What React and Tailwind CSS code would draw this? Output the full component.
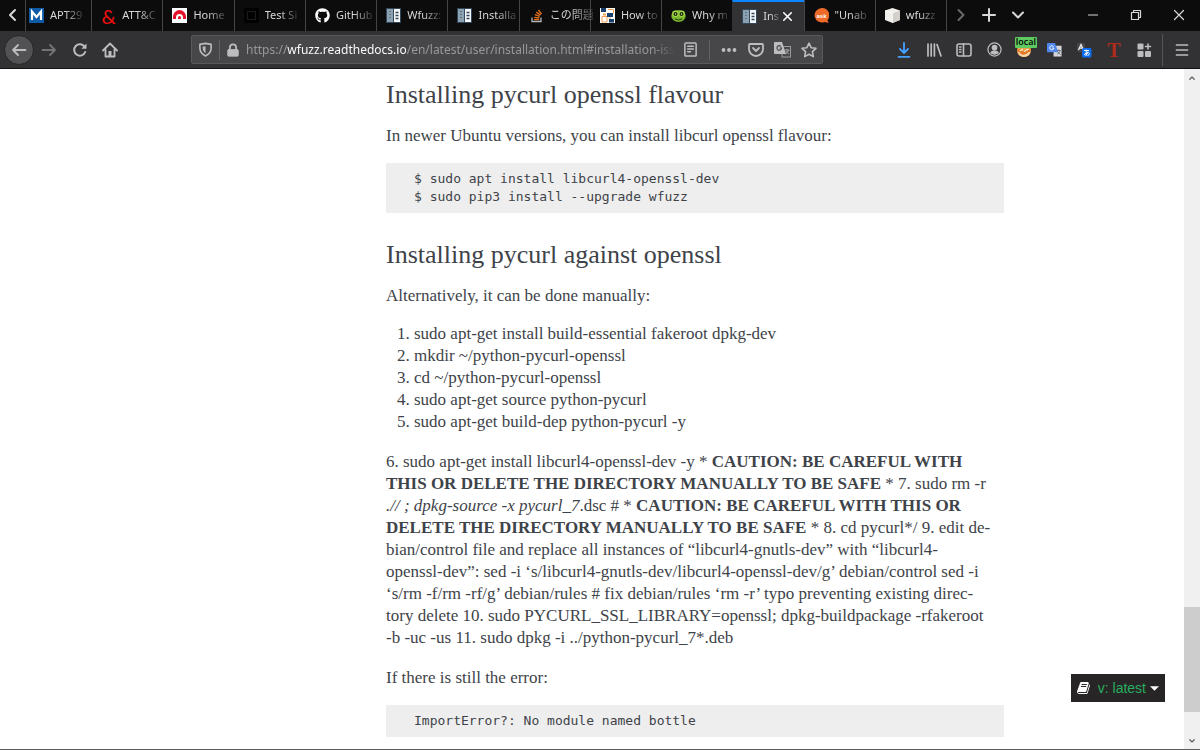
import React from "react";
import { FaGithub } from "react-icons/fa";

const fade = "[mask-image:linear-gradient(to_right,black_45%,rgba(0,0,0,0.2))]";

function DocsIcon() {
  return (
    <svg viewBox="0 0 15 15" className="h-[15px] w-[15px] shrink-0">
      <rect width="15" height="15" fill="#32485a" />
      <rect x="1" y="1" width="6" height="13" fill="#8ca1af" />
      <rect x="8" y="1" width="6" height="13" fill="#f4f6f7" />
      <path d="M3 3.500h2M3 6.500h2M3 9.500h2" stroke="#5c7485" />
      <path d="M9.500 4.500h3M9.500 7.500h3M9.500 10.500h3" stroke="#32485a" strokeWidth="1.600" />
    </svg>
  );
}

function MitreIcon() {
  return (
    <svg viewBox="0 0 15 15" className="h-[15px] w-[15px] shrink-0">
      <rect width="15" height="15" fill="#0d5aa6" />
      <path d="M3 12V3.500L7.500 9L12 3.500V12" fill="none" stroke="#fff" strokeWidth="2.200" />
    </svg>
  );
}

function Ampersand() {
  return <span aria-hidden="true" className="w-[15px] shrink-0 text-center font-['Lato',sans-serif] text-[20px] leading-none text-[#ee0f0f]">&amp;</span>;
}

function HomeFavicon() {
  return (
    <svg viewBox="0 0 15 15" className="h-[15px] w-[15px] shrink-0">
      <rect width="15" height="15" fill="#fff" />
      <path d="M1 11V8.500a6.500 6.500 0 0 1 13 0V11h-3V9.500a3.500 3.500 0 0 0-7 0V11z" fill="#e3122c" />
      <path d="M6 11V9.500a1.500 1.500 0 0 1 3 0V11z" fill="#e3122c" />
    </svg>
  );
}

function DarkSquare() {
  return (
    <svg viewBox="0 0 15 15" className="h-[15px] w-[15px] shrink-0">
      <rect width="15" height="15" rx="2" fill="#020202" />
      <rect x="3.500" y="3.500" width="8" height="8" fill="none" stroke="#1c1c1c" />
    </svg>
  );
}

function StackIcon() {
  return (
    <svg viewBox="0 0 15 15" className="h-[15px] w-[15px] shrink-0" fill="none">
      <path d="M3 9.500v4h9v-4" stroke="#b4b6b8" strokeWidth="1.300" />
      <path d="M5 11.700h5.200M5.200 9.300l5.100.7M5.900 6.600l4.800 1.700M7.300 4.100l4.200 3M9.500 2l3 4.200" stroke="#e8701c" strokeWidth="1.300" />
    </svg>
  );
}

function FlowFavicon() {
  return (
    <svg viewBox="0 0 15 15" className="h-[15px] w-[15px] shrink-0">
      <rect width="15" height="15" fill="#fff" />
      <path d="M8 1.500h5.500v4M2 8.500h5v5.500h-5zM10 9v4.500h4" fill="none" stroke="#f0a050" />
      <rect x="1" y="0" width="5" height="4" fill="#17406d" />
      <rect x="7" y="5" width="6" height="4" fill="#17406d" />
      <rect x="3" y="5.500" width="3" height="2" fill="#f0a050" />
      <rect x="9" y="11" width="5" height="3.500" fill="#17406d" />
    </svg>
  );
}

function FrogIcon() {
  return (
    <svg viewBox="0 0 15 15" className="h-[15px] w-[15px] shrink-0">
      <ellipse cx="7.500" cy="8" rx="7.200" ry="6" fill="#78b52c" />
      <circle cx="4.300" cy="5.800" r="3.200" fill="#a4d64b" />
      <circle cx="10.700" cy="5.800" r="3.200" fill="#a4d64b" />
      <circle cx="4.500" cy="6" r="2" fill="#182708" />
      <circle cx="10.500" cy="6" r="2" fill="#182708" />
      <circle cx="4.500" cy="6" r=".7" fill="#d6f19b" />
      <circle cx="10.500" cy="6" r=".7" fill="#d6f19b" />
      <path d="M4 11q3.500 2 7 0" fill="none" stroke="#294010" />
    </svg>
  );
}

function AskIcon() {
  return (
    <svg viewBox="0 0 15 15" className="h-[15px] w-[15px] shrink-0">
      <path d="M7.500 0a7.500 7.300 0 0 1 6 12l1 3-3.500-1A7.500 7.300 0 1 1 7.500 0z" fill="#ef6a28" />
      <text x="7.500" y="9.500" textAnchor="middle" fontSize="6" fontWeight="700" fontFamily="Liberation Sans, sans-serif" fill="#fff">ask</text>
    </svg>
  );
}

function CubeIcon() {
  return (
    <svg viewBox="0 0 15 15" className="h-[15px] w-[15px] shrink-0">
      <path d="M7.500 0L15 2.500V12L7.500 15L0 12V2.500z" fill="#f2f0ed" />
      <path d="M7.500 5.500L15 2.500V12L7.500 15z" fill="#d3d0cb" />
      <path d="M0 2.500l7.500 3V15" fill="none" stroke="#fff" strokeWidth=".6" />
    </svg>
  );
}

const tabs = [
  { icon: <MitreIcon />, label: "APT29", first: true },
  { icon: <Ampersand />, label: "ATT&C" },
  { icon: <HomeFavicon />, label: "Home" },
  { icon: <DarkSquare />, label: "Test Si" },
  { icon: <FaGithub className="h-[15px] w-[15px] shrink-0 text-white" />, label: "GitHub" },
  { icon: <DocsIcon />, label: "Wfuzz:" },
  { icon: <DocsIcon />, label: "Installa" },
  { icon: <StackIcon />, label: "この問題" },
  { icon: <FlowFavicon />, label: "How to" },
  { icon: <FrogIcon />, label: "Why m" },
  { icon: <DocsIcon />, label: "Ins", active: true },
  { icon: <AskIcon />, label: "\"Unab" },
  { icon: <CubeIcon />, label: "wfuzz" },
];

function Stroke({ d, size = "h-4 w-4", width = 2, children }) {
  return (
    <svg viewBox="0 0 16 16" className={size} fill="none" stroke="currentColor" strokeWidth={width} strokeLinecap="round" strokeLinejoin="round">
      {d && <path d={d} />}
      {children}
    </svg>
  );
}

function IconButton({ label, className = "w-[30px]", children }) {
  return (
    <button type="button" aria-label={label} className={`flex h-[30px] shrink-0 items-center justify-center ${className}`}>
      {children}
    </button>
  );
}

function TabStrip() {
  return (
    <header className="flex h-[31px] shrink-0 bg-[#0c0c0d] text-[#d8d8da]">
      <IconButton label="Scroll tabs left" className="w-[25px]">
        <Stroke d="M10 3L5 8l5 5" />
      </IconButton>
      <nav className="flex min-w-0 flex-1">
        {tabs.map((tab, i) => (
          <div
            key={i}
            className={`flex min-w-0 items-center border-l ${tab.first ? "flex-[1_1_66px] pl-[3px]" : "flex-[1_1_71px] pl-[9px]"} ${tab.active ? "border-t-2 border-l-[#323234] border-t-[#0a84ff] bg-[#323234]" : "border-[#454547]"}`}
          >
            <button type="button" className={`flex h-full min-w-0 flex-1 items-center gap-[6px] text-left text-[11px] ${tab.active ? "" : "mr-[5px]"}`}>
              {tab.icon}
              <span className={`whitespace-nowrap ${fade}`}>{tab.label}</span>
            </button>
            {tab.active && (
              <button type="button" aria-label="Close tab" className="mr-[9px] ml-px shrink-0 text-white">
                <Stroke d="M4 4l8 8M12 4l-8 8" size="h-[15px] w-[15px]" width={1.7} />
              </button>
            )}
          </div>
        ))}
      </nav>
      <div className="flex w-[254px] shrink-0 border-l border-[#454547]">
        <IconButton label="Scroll tabs right" className="w-[27px] text-[#6a6a6c]"><Stroke d="M5.500 3l5 5-5 5" /></IconButton>
        <IconButton label="New tab" className="w-[29px]"><Stroke d="M8 2v12M2 8h12" /></IconButton>
        <IconButton label="List all tabs"><Stroke d="M3 5.500l5 5 5-5" /></IconButton>
        <div className="ml-auto flex">
          <IconButton label="Minimize" className="w-[43px]"><Stroke d="M3.500 8h9" width={1.2} /></IconButton>
          <IconButton label="Restore" className="w-[43px]">
            <Stroke width={1.2}><path d="M3.500 5.500h7v7h-7zM5.500 5.500v-2h7v7h-2" /></Stroke>
          </IconButton>
          <IconButton label="Close" className="w-[43px]"><Stroke d="M3.500 3.500l9 9M12.500 3.500l-9 9" width={1.2} /></IconButton>
        </div>
      </div>
    </header>
  );
}

function Toolbar() {
  return (
    <div className="flex h-[38px] shrink-0 items-center border-b border-[#111112] bg-[#323234] text-[#bdbdbf]">
      <div className="flex w-[191px] shrink-0 items-center pl-1">
        <button type="button" aria-label="Back" className="flex h-[30px] w-[30px] items-center justify-center rounded-full border border-[#252526] bg-[#525254]">
          <Stroke d="M14.500 8H2M7 3L2 8l5 5" width={1.8} />
        </button>
        <IconButton label="Forward"><span className="text-[#737375]"><Stroke d="M1.500 8H14M9 3l5 5-5 5" width={1.8} /></span></IconButton>
        <IconButton label="Reload" className="ml-px w-[30px]">
          <Stroke><path d="M13.200 10A5.700 5.700 0 1 1 12.500 4.600" /><path d="M14.500 1.500v5.200H9.300z" fill="currentColor" stroke="none" /></Stroke>
        </IconButton>
        <IconButton label="Home">
          <Stroke width={1.8}><path d="M1 8.500L8 1.500l7 7M3.500 7.500v7h9v-7" /><path d="M6.500 14V9h3v5z" fill="currentColor" stroke="none" /></Stroke>
        </IconButton>
      </div>
      <div className="flex h-[29px] min-w-0 flex-1 items-center rounded-[2px] border border-[#59595b] bg-[#474749]">
        <IconButton label="Tracking protection" className="w-[27px]">
          <Stroke size="h-[15px] w-[15px]" width={1.7}><path d="M2 2.500l6-1 6 1v4c0 4-2 6.500-6 8.500-4-2-6-4.500-6-8.500z" /><path d="M8 4.500v7.500C6 10.500 5 9 5 6.500V5z" fill="currentColor" stroke="none" /></Stroke>
        </IconButton>
        <span className="h-5 w-px shrink-0 bg-[#606368]" />
        <IconButton label="Site information" className="w-[26px]">
          <Stroke size="h-[14px] w-[14px]"><path d="M4.500 8V5a3.500 3.500 0 0 1 7 0v3" /><rect x="2" y="7.500" width="12" height="7.500" rx="1" fill="currentColor" strokeWidth="1" /></Stroke>
        </IconButton>
        <a href="#installation-issues" aria-label="Page address" className="min-w-0 flex-1 overflow-hidden whitespace-nowrap text-[12px] text-[#98989a] [mask-image:linear-gradient(to_right,black_95%,transparent)]">
          https://<span className="text-[#f9f9fa]">wfuzz.readthedocs.io</span>/en/latest/user/installation.html#installation-iss
        </a>
        <IconButton label="Reader view">
          <Stroke size="h-[15px] w-[15px]" width={1.6}><rect x="2" y="1" width="12" height="14" rx="1" /><path d="M5 4.500h6M5 7.500h6M5 10.500h3" /></Stroke>
        </IconButton>
        <span className="ml-1 mr-[5px] h-5 w-px shrink-0 bg-[#606368]" />
        <IconButton label="Page actions" className="w-[27px]">
          <Stroke><g fill="currentColor" stroke="none"><circle cx="2.500" cy="8" r="1.900" /><circle cx="8" cy="8" r="1.900" /><circle cx="13.500" cy="8" r="1.900" /></g></Stroke>
        </IconButton>
        <IconButton label="Save to Pocket" className="w-[27px]">
          <Stroke width={1.8}><path d="M2 2h12q1 0 1 1v4a7 7 0 0 1-14 0V3q0-1 1-1z" /><path d="M5 6l3 3 3-3" /></Stroke>
        </IconButton>
        <IconButton label="Translate page" className="w-[26px]">
          <svg viewBox="0 0 17 16" className="h-4 w-[17px]">
            <rect x="8" y="4.500" width="8.500" height="10.500" fill="none" stroke="#9a9a9c" />
            <path d="M1 0h7l4 12H1q-1 0-1-1V1q0-1 1-1z" fill="#bdbdbf" />
            <path d="M7 4.500A2.300 2.300 0 1 0 7.500 6H5.500" fill="none" stroke="#474749" strokeWidth="1.100" />
            <path d="M10.500 8h5M13 7v1M14.500 8c-.5 2-2 3.500-3 4M12 9c1 2 2 2.500 3 3" fill="none" stroke="#bdbdbf" strokeWidth=".8" />
          </svg>
        </IconButton>
        <IconButton label="Bookmark this page" className="w-[27px]">
          <Stroke d="M8 1.200l2.100 4.500 4.900.6-3.600 3.400.9 4.900L8 12.200l-4.300 2.400.9-4.900L1 6.300l4.900-.6z" width={1.6} />
        </IconButton>
      </div>
      <div className="ml-[66px] flex w-[311px] shrink-0 items-center">
        <IconButton label="Downloads"><span className="text-[#45a1ff]"><Stroke d="M8 1v9.500M4 7l4 4 4-4M2.500 14.800h11" width={1.8} /></span></IconButton>
        <IconButton label="Library"><Stroke d="M2 2v12M5.200 2v12M8.400 2v12M11 2.500L15 14" width={1.7} /></IconButton>
        <IconButton label="Sidebars">
          <Stroke width={1.6}><rect x="1" y="2" width="14" height="12" rx="2" /><path d="M7.500 2v12M3.500 5h1.500M3.500 7.500h1.500M3.500 10h1.500" /></Stroke>
        </IconButton>
        <IconButton label="Account">
          <Stroke width={1.3} size="h-[15px] w-[15px]"><circle cx="8" cy="8" r="7" /><circle cx="8" cy="6" r="3" fill="currentColor" stroke="none" /><path d="M3.500 12q0-3 4.500-3t4.500 3q-4.500 3-9 0z" fill="currentColor" stroke="none" /></Stroke>
        </IconButton>
        <button type="button" aria-label="FoxyProxy: local" className="relative flex h-[30px] w-[30px] shrink-0 items-center justify-center">
          <svg viewBox="0 0 16 16" className="h-4 w-4">
            <circle cx="8" cy="8" r="7" fill="#e9a04a" />
            <path d="M1.300 6q2 4 6.700 3.500T14.700 6v3A7 7 0 0 1 8 15 7 7 0 0 1 1.300 9z" fill="#e47824" />
            <path d="M1.500 9.500q2 0 3.500 2.500 3 1.500 6-.5 2-2 3.500-2A7 7 0 0 1 8 15 7 7 0 0 1 1.500 9.500z" fill="#f3d9b0" />
            <path d="M4 9l3-2M8.500 10q1-3 4-2.500" stroke="#fff" fill="none" />
          </svg>
          <span className="absolute top-[2px] right-[2px] h-[11px] rounded-[1px] bg-[#5fca62] px-px font-['Open_Sans',sans-serif] text-[9px] leading-[10px] font-semibold text-black">local</span>
        </button>
        <IconButton label="Google Translate">
          <svg viewBox="0 0 16 16" className="h-[15px] w-[15px]">
            <rect x="7" y="4" width="8.500" height="11.500" fill="#d7d7d9" />
            <path d="M1 1h7.500l3.500 10H1q-1 0-1-1V2q0-1 1-1z" fill="#4f87ed" />
            <path d="M7 5A2.200 2.200 0 1 0 7.300 6.500H5.500" fill="none" stroke="#fff" />
            <path d="M10.500 9h4M12.500 8v1M14 9c-.5 2-1.500 3-3 4M11.500 10.500l3 3" fill="none" stroke="#5d6570" strokeWidth=".9" />
          </svg>
        </IconButton>
        <IconButton label="Translate selection">
          <svg viewBox="0 0 16 16" className="h-4 w-4">
            <rect x="1" y="1" width="8" height="9" rx="1" fill="#464648" />
            <path d="M2.500 8L5 2.500 7.500 8M3.500 6.200h3" fill="none" stroke="#eee" strokeWidth="1.300" />
            <rect x="6" y="6" width="9.500" height="9.500" rx="1.500" fill="#0b6cf0" />
            <path d="M8 8.500h5M10.200 7.500q-.3 4 .5 6M12 9.500q-1 4-3 3.800 -1.500-1 1-2.300 3-1 3.500.5 0 1.500-2 2" fill="none" stroke="#fff" strokeWidth=".9" />
          </svg>
        </IconButton>
        <IconButton label="Text tool"><span className="font-['Liberation_Serif',serif] text-[20px] leading-none font-bold text-[#b02a1c]">T</span></IconButton>
        <IconButton label="Extensions">
          <Stroke><g fill="currentColor" stroke="none"><rect x="1.500" y="1.500" width="6" height="6" rx="1" /><rect x="1.500" y="9" width="6" height="6" rx="1" /><rect x="9" y="9" width="6" height="6" rx="1" /></g><path d="M12 2v5M9.500 4.500h5" strokeWidth="1.600" /></Stroke>
        </IconButton>
        <span className="ml-[3px] h-8 w-px bg-[#555557]" />
        <IconButton label="Open menu" className="ml-1 w-[30px]"><Stroke d="M2.500 3h11M2.500 8h11M2.500 13h11" width={1.7} /></IconButton>
      </div>
    </div>
  );
}

function Code({ children }) {
  return <pre className="mt-4 bg-[#eeeeee] px-7 py-[7px] font-['DejaVu_Sans_Mono',monospace] text-[13px] leading-[18px]">{children}</pre>;
}

function Article() {
  return (
    <article className="mx-auto max-w-[940px] pt-[10px] pr-[58px] pl-[264px] font-['Liberation_Serif',serif] text-[17px] leading-[22px] whitespace-nowrap text-[#3e4349]">
      <h2 className="text-[26px] leading-8">Installing pycurl openssl flavour</h2>
      <p className="mt-[14px]">In newer Ubuntu versions, you can install libcurl openssl flavour:</p>
      <Code>{"$ sudo apt install libcurl4-openssl-dev\n$ sudo pip3 install --upgrade wfuzz"}</Code>
      <h2 className="mt-[26px] text-[26px] leading-8">Installing pycurl against openssl</h2>
      <p className="mt-[14px]">Alternatively, it can be done manually:</p>
      <ol className="mt-4 list-decimal pl-7">
        <li>sudo apt-get install build-essential fakeroot dpkg-dev</li>
        <li>mkdir ~/python-pycurl-openssl</li>
        <li>cd ~/python-pycurl-openssl</li>
        <li>sudo apt-get source python-pycurl</li>
        <li>sudo apt-get build-dep python-pycurl -y</li>
      </ol>
      <p className="mt-[18px]">
        6. sudo apt-get install libcurl4-openssl-dev -y * <strong>CAUTION: BE CAREFUL WITH<br />
        THIS OR DELETE THE DIRECTORY MANUALLY TO BE SAFE</strong> * 7. sudo rm -r<br />
        <em>.// ; dpkg-source -x pycurl_7</em>.dsc # * <strong>CAUTION: BE CAREFUL WITH THIS OR<br />
        DELETE THE DIRECTORY MANUALLY TO BE SAFE</strong> * 8. cd pycurl*/ 9. edit de-<br />
        bian/control file and replace all instances of “libcurl4-gnutls-dev” with “libcurl4-<br />
        openssl-dev”: sed -i ‘s/libcurl4-gnutls-dev/libcurl4-openssl-dev/g’ debian/control sed -i<br />
        ‘s/rm -f/rm -rf/g’ debian/rules # fix debian/rules ‘rm -r’ typo preventing existing direc-<br />
        tory delete 10. sudo PYCURL_SSL_LIBRARY=openssl; dpkg-buildpackage -rfakeroot<br />
        -b -uc -us 11. sudo dpkg -i ../python-pycurl_7*.deb
      </p>
      <p className="mt-[18px]">If there is still the error:</p>
      <Code>ImportError?: No module named bottle</Code>
    </article>
  );
}

function Scrollbar() {
  return (
    <div className="flex w-4 shrink-0 flex-col items-center bg-[#f0f0f0] text-[#606060]">
      <span className="flex h-[17px] items-center"><Stroke d="M4.500 10L8 6.500 11.500 10" size="h-[10px] w-[10px]" /></span>
      <span className="flex-[521]" />
      <span className="w-full flex-[105] bg-[#cdcdcd]" />
      <span className="flex-[20]" />
      <span className="flex h-[17px] items-center"><Stroke d="M4.500 6L8 9.500 11.500 6" size="h-[10px] w-[10px]" /></span>
    </div>
  );
}

export default function App() {
  return (
    <div className="flex h-screen flex-col overflow-hidden border-b border-[#5c5c5c] bg-white font-['Noto_Sans','Noto_Sans_CJK_JP',sans-serif]">
      <TabStrip />
      <Toolbar />
      <div className="flex min-h-0 flex-1">
        <main className="relative min-w-0 flex-1 overflow-hidden">
          <Article />
          <button type="button" className="absolute right-[19px] bottom-[47px] flex h-7 items-center bg-[#272525] px-[6px] font-['Liberation_Sans',sans-serif] text-[14px] text-[#27ae60]">
            <svg viewBox="0 0 1792 1792" className="mr-[7px] h-[14px] w-[14px]" fill="#fcfcfc">
              <path d="M1639 478q40 57 18 129l-275 906q-19 64-76.500 107.500t-122.500 43.500h-923q-77 0-148.500-53.500t-99.500-131.500q-24-67-2-127 0-4 3-27t4-37q1-8-3-21.500t-3-19.500q2-11 8-21t16.500-23.500 16.500-23.500q23-38 45-91.500t30-91.500q3-10 .5-30t-.5-28q3-11 17-28t17-23q21-36 42-92t25-90q1-9-2.500-32t.5-28q4-13 22-30.500t22-22.500q19-26 42.500-84.500t27.500-96.500q1-8-3-25.500t-2-26.500q2-8 9-18t18-23 17-21q8-12 16.500-30.500t15-35 16-36 19.500-32 26.500-23.500 36-11.500 47.500 5.500l-1 3q38-9 51-9h761q74 0 114 56t18 130l-274 906q-36 119-71.500 153.500t-128.500 34.500h-869q-27 0-38 15-11 16-1 43 24 70 144 70h923q29 0 56-15.500t35-41.500l300-987q7-22 5-57 38 15 59 43zm-1064 2q-4 13 2 22.500t20 9.500h608q13 0 25.500-9.500t16.500-22.500l21-64q4-13-2-22.500t-20-9.500h-608q-13 0-25.500 9.500t-16.500 22.500zm-83 256q-4 13 2 22.500t20 9.500h608q13 0 25.500-9.500t16.500-22.500l21-64q4-13-2-22.500t-20-9.500h-608q-13 0-25.500 9.500t-16.500 22.500z" />
            </svg>
            v: latest
            <svg viewBox="0 0 8 4" className="ml-1 h-[5px] w-[9px]" fill="#fcfcfc"><path d="M0 0h8L4 4z" /></svg>
          </button>
        </main>
        <Scrollbar />
      </div>
    </div>
  );
}
